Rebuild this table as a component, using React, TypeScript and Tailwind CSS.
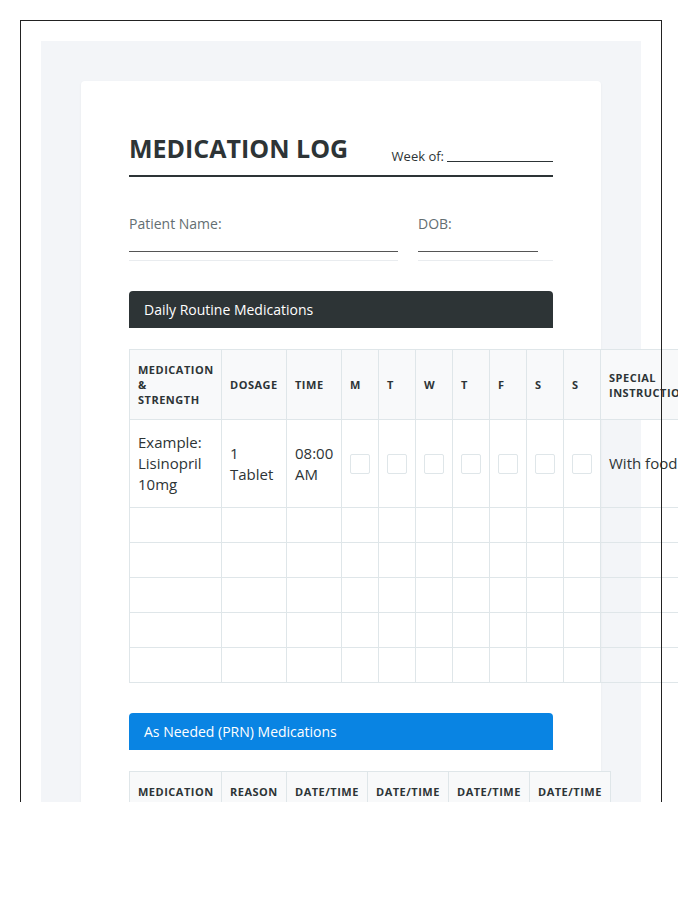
import * as React from "react";

const days = ["M", "T", "W", "T", "F", "S", "S"];

function Field({ label, line, className = "" }: { label: string; line: string; className?: string }) {
  return (
    <div className={`flex flex-col border-b border-[#e9ecef] pb-[8px] ${className}`}>
      <span className="text-[14px] leading-[21px] text-[#636e72]">{label}</span>
      <span className={`mt-[2px] h-[16px] border-b border-[#555] ${line}`} />
    </div>
  );
}

function SectionBar({ title, color }: { title: string; color: string }) {
  return (
    <div className={`h-[37px] rounded-t-[4px] px-[15px] flex items-center text-[14px] text-white ${color}`}>
      {title}
    </div>
  );
}

function Checkbox() {
  return <div className="w-[20px] h-[20px] rounded-[2px] border border-[#dfe6e9] bg-white" />;
}

const th =
  "border border-[#dfe6e9] bg-[#f8f9fa] px-2 py-3 text-left align-middle text-[11px] leading-[15px] font-bold uppercase tracking-[0.5px] text-[#2d3436]";
const td = "border border-[#dfe6e9] px-2 py-3 align-middle text-[15px] leading-[21px] text-[#2d3436]";

export default function App() {
  return (
    <div className="w-[678px] h-[802px] overflow-hidden bg-white pl-5 pt-5 font-['Open_Sans',sans-serif]">
      <div className="relative w-[642px]">
        <div className="border border-transparent p-5">
          <div className="bg-[#f3f5f8] p-10">
            <div className="bg-white rounded-[4px] shadow-[0_1px_3px_rgba(0,0,0,0.05)] p-12">
              {/* Header */}
              <div className="flex items-end justify-between border-b-2 border-[#2d3436] pt-[2px] pb-[10px]">
                <h1 className="text-[25px] leading-[34px] font-bold text-[#2d3436]">MEDICATION LOG</h1>
                <div className="text-[13px] leading-[18px] text-[#2d3436] flex items-end">
                  Week of:
                  <span className="inline-block w-[106px] h-[14px] border-b border-[#2d3436] ml-[3px] mb-[3px]" />
                </div>
              </div>

              {/* Patient info */}
              <div className="flex gap-5 mt-[36px]">
                <Field label="Patient Name:" line="w-full" className="flex-1" />
                <Field label="DOB:" line="w-[120px]" className="w-[135px]" />
              </div>

              {/* Daily routine */}
              <div className="mt-[30px]">
                <SectionBar title="Daily Routine Medications" color="bg-[#2d3436]" />
              </div>
              <table className="mt-[21px] border-collapse table-fixed w-[581px]">
                <colgroup>
                  <col className="w-[92px]" />
                  <col className="w-[65px]" />
                  <col className="w-[55px]" />
                  {days.map((_, i) => (
                    <col key={i} className="w-[37px]" />
                  ))}
                  <col className="w-[110px]" />
                </colgroup>
                <thead>
                  <tr className="h-[70px]">
                    <th className={th}>
                      Medication
                      <br />&amp;
                      <br />
                      Strength
                    </th>
                    <th className={th}>Dosage</th>
                    <th className={th}>Time</th>
                    {days.map((d, i) => (
                      <th key={i} className={th}>
                        {d}
                      </th>
                    ))}
                    <th className={th}>Special Instructions</th>
                  </tr>
                </thead>
                <tbody>
                  <tr className="h-[88px]">
                    <td className={td}>Example: Lisinopril 10mg</td>
                    <td className={td}>1 Tablet</td>
                    <td className={td}>08:00 AM</td>
                    {days.map((_, i) => (
                      <td key={i} className={td}>
                        <Checkbox />
                      </td>
                    ))}
                    <td className={`${td} whitespace-nowrap`}>With food</td>
                  </tr>
                  {[0, 1, 2, 3, 4].map((r) => (
                    <tr key={r} className="h-[35px]">
                      {Array.from({ length: 11 }).map((_, c) => (
                        <td key={c} className="border border-[#dfe6e9] p-0" />
                      ))}
                    </tr>
                  ))}
                </tbody>
              </table>

              {/* PRN */}
              <div className="mt-[30px]">
                <SectionBar title="As Needed (PRN) Medications" color="bg-[#0984e3]" />
              </div>
              <table className="mt-[21px] border-collapse table-fixed w-[481px]">
                <colgroup>
                  <col className="w-[92px]" />
                  <col className="w-[65px]" />
                  <col className="w-[81px]" />
                  <col className="w-[81px]" />
                  <col className="w-[81px]" />
                  <col className="w-[81px]" />
                </colgroup>
                <thead>
                  <tr>
                    <th className={th}>Medication</th>
                    <th className={th}>Reason</th>
                    <th className={th}>Date/Time</th>
                    <th className={th}>Date/Time</th>
                    <th className={th}>Date/Time</th>
                    <th className={th}>Date/Time</th>
                  </tr>
                </thead>
              </table>
              <div className="h-[120px]" />
            </div>
          </div>
        </div>
        {/* frame line drawn over overflowing content */}
        <div className="pointer-events-none absolute inset-0 border border-[#222]" />
      </div>
    </div>
  );
}
